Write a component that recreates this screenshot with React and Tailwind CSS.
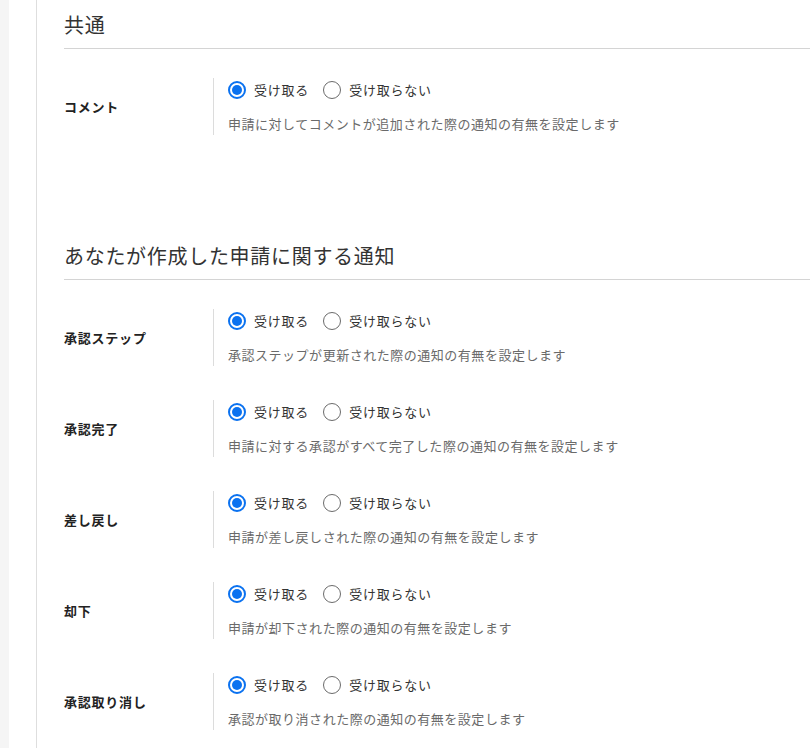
import React, { useState } from "react";

const sections = [
  {
    title: "共通",
    items: [
      { key: "comment", label: "コメント", desc: "申請に対してコメントが追加された際の通知の有無を設定します" },
    ],
  },
  {
    title: "あなたが作成した申請に関する通知",
    items: [
      { key: "step", label: "承認ステップ", desc: "承認ステップが更新された際の通知の有無を設定します" },
      { key: "done", label: "承認完了", desc: "申請に対する承認がすべて完了した際の通知の有無を設定します" },
      { key: "back", label: "差し戻し", desc: "申請が差し戻しされた際の通知の有無を設定します" },
      { key: "reject", label: "却下", desc: "申請が却下された際の通知の有無を設定します" },
      { key: "cancel", label: "承認取り消し", desc: "承認が取り消された際の通知の有無を設定します" },
    ],
  },
];

function Radio({ checked, label, onClick }) {
  return (
    <button type="button" onClick={onClick} className="flex items-center gap-2 cursor-pointer">
      {checked ? (
        <span className="w-[18px] h-[18px] rounded-full border-2 border-[#0b72f0] flex items-center justify-center">
          <span className="w-[10px] h-[10px] rounded-full bg-[#0b72f0]" />
        </span>
      ) : (
        <span className="w-[18px] h-[18px] rounded-full border-[1.5px] border-[#6b6b6b]" />
      )}
      <span className="text-[13px] tracking-[0.06em] text-[#333]">{label}</span>
    </button>
  );
}

function SettingRow({ item, value, onChange }) {
  return (
    <div className="flex items-center">
      <div className="w-[149px] text-[13px] font-bold tracking-[0.06em] text-[#222]">{item.label}</div>
      <div className="border-l border-[#dcdcdc] pl-[14px] h-[57px]">
        <div className="flex items-center gap-[14px] h-6">
          <Radio checked={value} label="受け取る" onClick={() => onChange(true)} />
          <Radio checked={!value} label="受け取らない" onClick={() => onChange(false)} />
        </div>
        <p className="mt-[12px] leading-5 text-[13px] tracking-[0.04em] text-[#6a6a6a]">{item.desc}</p>
      </div>
    </div>
  );
}

export default function App() {
  const [values, setValues] = useState({});
  const get = (k) => values[k] ?? true;

  return (
    <div
      className="w-[810px] h-[748px] overflow-hidden flex bg-white"
      style={{ fontFamily: '"Noto Sans CJK JP", "Noto Sans", sans-serif' }}
    >
      <div className="w-[9px] bg-[#f5f5f5] shrink-0" />
      <div className="w-[28px] shrink-0 border-r border-[#dedede]" />
      <div className="flex-1 pl-[27px] pt-[11px]">
        {sections.map((s, i) => (
          <section key={s.title} className={i > 0 ? "mt-[107px]" : ""}>
            <h2 className="text-[20px] leading-7 tracking-[0.035em] text-[#333] pb-[9px] border-b border-[#d4d4d4] -mr-4">
              {s.title}
            </h2>
            <div className="mt-[29px] flex flex-col gap-[34px]">
              {s.items.map((item) => (
                <SettingRow
                  key={item.key}
                  item={item}
                  value={get(item.key)}
                  onChange={(v) => setValues((p) => ({ ...p, [item.key]: v }))}
                />
              ))}
            </div>
          </section>
        ))}
      </div>
    </div>
  );
}
